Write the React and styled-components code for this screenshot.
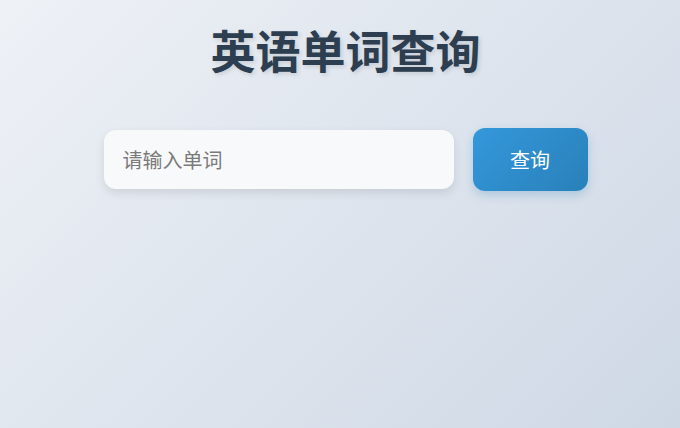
import React from 'react';
import styled, { createGlobalStyle } from 'styled-components';

const GlobalStyle = createGlobalStyle`
    html, body {
        margin: 0;
        padding: 0;
    }
    body {
        font-family: "Noto Sans CJK SC", "Liberation Sans", sans-serif;
    }
`;

const Page = styled.main`
    min-height: 100vh;
    box-sizing: border-box;
    background: linear-gradient(135deg, #eef1f6 0%, #ced8e5 100%);
    display: flex;
    flex-direction: column;
    align-items: center;
    padding: 18px 0 0 11px;
`;

const Title = styled.h1`
    margin: 0;
    font-size: 45px;
    line-height: 64px;
    font-weight: 700;
    color: #2c3e50;
    text-shadow: 2px 2px 4px rgba(0, 0, 0, 0.12);
`;

const SearchBar = styled.form`
    display: flex;
    align-items: center;
    gap: 19px;
    margin-top: 46px;
`;

const Input = styled.input`
    width: 350px;
    height: 59px;
    box-sizing: border-box;
    border: none;
    border-radius: 12px;
    padding: 0 19px;
    background: #f8f9fb;
    font-family: inherit;
    font-size: 20px;
    color: #333;
    box-shadow: 0 4px 10px rgba(0, 0, 0, 0.1);
    outline: none;

    &::placeholder {
        color: #7a7a7a;
    }
`;

const Button = styled.button`
    width: 115px;
    height: 63px;
    border: none;
    border-radius: 12px;
    background: linear-gradient(135deg, #3498db 0%, #2980b9 100%);
    color: #fff;
    font-family: inherit;
    font-size: 20px;
    box-shadow: 0 4px 10px rgba(41, 128, 185, 0.25);
    cursor: pointer;
`;

function App() {
    return (
        <>
            <GlobalStyle />
            <Page>
                <Title>英语单词查询</Title>
                <SearchBar onSubmit={e => e.preventDefault()}>
                    <Input type='text' placeholder='请输入单词' />
                    <Button type='submit'>查询</Button>
                </SearchBar>
            </Page>
        </>
    );
}

export default App;
